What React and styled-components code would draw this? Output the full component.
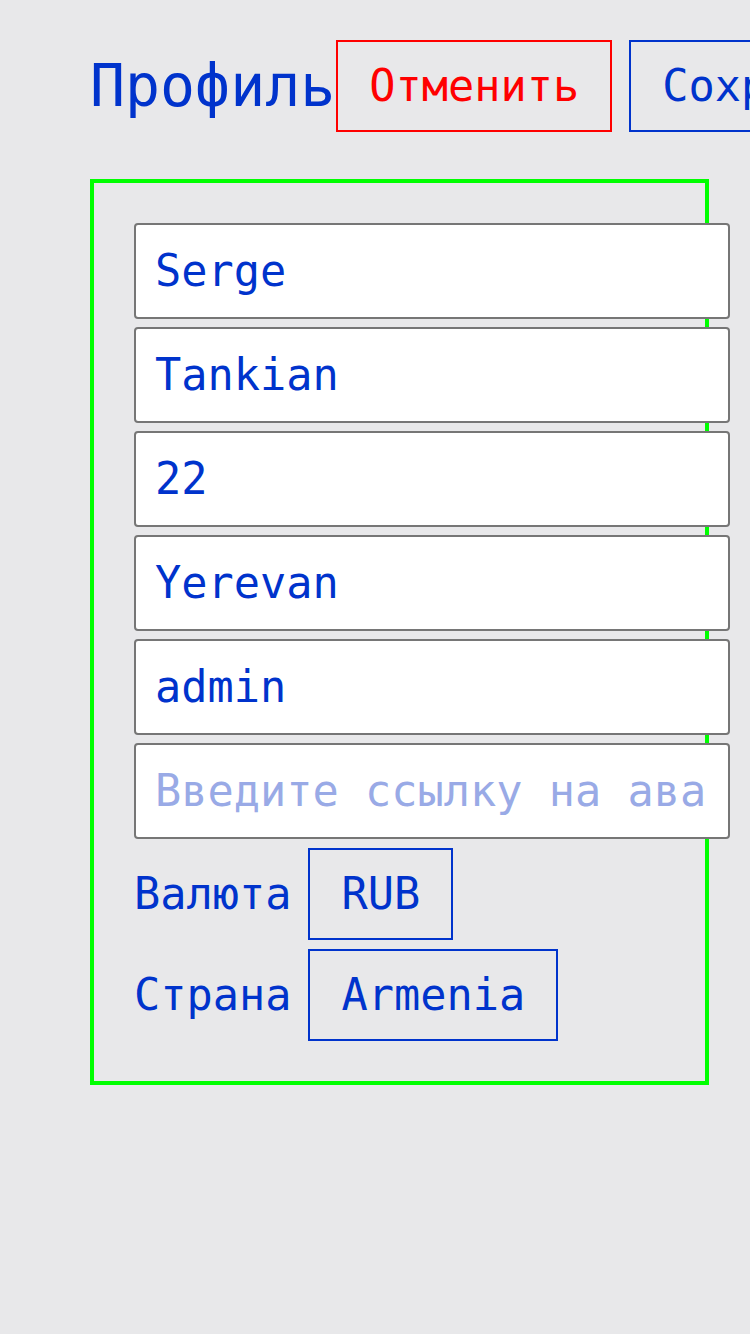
import React, { useState } from 'react'
import styled, { createGlobalStyle } from 'styled-components'

const GlobalStyle = createGlobalStyle`
    html, body {
        margin: 0;
        padding: 0;
        background: #e8e8ea;
        overflow: hidden;
        font-family: "DejaVu Sans Mono", "Liberation Mono", monospace;
    }
`;

const Page = styled.div`
    min-height: 1334px;
    padding: 40px 0 0 90px;
    box-sizing: border-box;
`;

const Header = styled.div`
    display: flex;
    align-items: center;
    width: max-content;
`;

const Title = styled.h1`
    margin: 0 1px 0 0;
    font-family: "DejaVu Sans Mono", monospace;
    font-weight: normal;
    font-size: 58.2px;
    color: #0033cc;
`;

const Actions = styled.div`
    display: flex;
    gap: 17px;
`;

const Button = styled.button`
    height: 92px;
    padding: 0 31px;
    background: transparent;
    border: 2px solid ${props => props.$color};
    color: ${props => props.$color};
    font-family: "DejaVu Sans Mono", monospace;
    font-size: 43.6px;
    cursor: pointer;
    white-space: nowrap;
`;

const Card = styled.div`
    box-sizing: border-box;
    width: 619px;
    margin-top: 47px;
    padding: 40px 40px 40px;
    border: 4px solid #00ff00;
    display: flex;
    flex-direction: column;
    gap: 8px;
`;

const Input = styled.input`
    box-sizing: border-box;
    flex: none;
    width: 596px;
    height: 96px;
    padding: 0 24px 0 19px;
    background: #fff;
    border: 2px solid #767676;
    border-radius: 4px;
    color: #0033cc;
    font-family: "DejaVu Sans Mono", monospace;
    font-size: 43.6px;
    outline: none;
    &::placeholder {
        color: #99aae6;
    }
`;

const Row = styled.div`
    display: flex;
    align-items: center;
    gap: 17px;
    margin-top: 1px;
`;

const Label = styled.span`
    color: #0033cc;
    font-size: 43.6px;
`;

const Select = styled.div`
    box-sizing: border-box;
    height: 92px;
    padding: 0 31px;
    display: flex;
    align-items: center;
    border: 2px solid #0033cc;
    color: #0033cc;
    font-size: 43.6px;
    cursor: pointer;
`;

const App = () => {
    const [profile, setProfile] = useState({
        first: 'Serge',
        last: 'Tankian',
        age: '22',
        city: 'Yerevan',
        username: 'admin',
        avatar: '',
    });
    const change = (key) => (e) => setProfile({ ...profile, [key]: e.target.value });

  return (
    <Page>
        <GlobalStyle />
        <Header>
            <Title>Профиль</Title>
            <Actions>
                <Button $color="#ff0000">Отменить</Button>
                <Button $color="#0033cc">Сохранить</Button>
            </Actions>
        </Header>
        <Card>
            <Input value={profile.first} onChange={change('first')} />
            <Input value={profile.last} onChange={change('last')} />
            <Input value={profile.age} onChange={change('age')} />
            <Input value={profile.city} onChange={change('city')} />
            <Input value={profile.username} onChange={change('username')} />
            <Input value={profile.avatar} onChange={change('avatar')} placeholder="Введите ссылку на аватар" />
            <Row>
                <Label>Валюта</Label>
                <Select>RUB</Select>
            </Row>
            <Row>
                <Label>Страна</Label>
                <Select>Armenia</Select>
            </Row>
        </Card>
    </Page>
  )
}

export default App;
